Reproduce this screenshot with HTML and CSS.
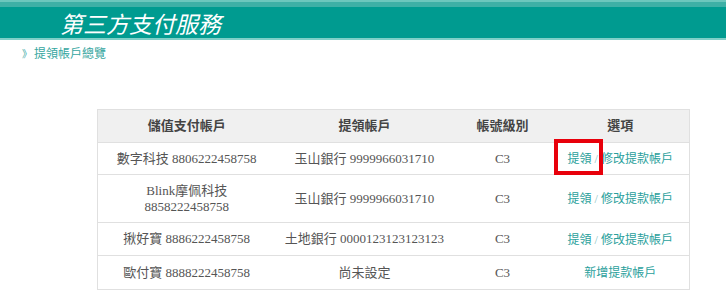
FILE: index.html
```html
<!DOCTYPE html>
<html lang="zh-Hant">
<head>
<meta charset="utf-8">
<link rel="stylesheet" href="styles.css">
</head>
<body>
<header class="banner">
  <div class="banner-top"></div>
  <div class="banner-main"><h1 class="title">第三方支付服務</h1></div>
  <div class="banner-line"></div>
</header>
<nav class="crumb"><span class="crumb-mark">》</span>提領帳戶總覽</nav>
<table class="accounts">
  <colgroup>
    <col class="c1"><col class="c2"><col class="c3"><col class="c4">
  </colgroup>
  <thead>
    <tr class="r-head"><th>儲值支付帳戶</th><th>提領帳戶</th><th>帳號級別</th><th>選項</th></tr>
  </thead>
  <tbody>
    <tr class="r1"><td>數字科技 8806222458758</td><td>玉山銀行 9999966031710</td><td>C3</td><td><a class="lnk hl">提領</a><span class="sep"> / </span><a class="lnk">修改提款帳戶</a></td></tr>
    <tr class="r2"><td>Blink摩佩科技<br>8858222458758</td><td>玉山銀行 9999966031710</td><td>C3</td><td><a class="lnk">提領</a><span class="sep"> / </span><a class="lnk">修改提款帳戶</a></td></tr>
    <tr class="r3"><td>揪好寶 8886222458758</td><td>土地銀行 0000123123123123</td><td>C3</td><td><a class="lnk">提領</a><span class="sep"> / </span><a class="lnk">修改提款帳戶</a></td></tr>
    <tr class="r4"><td>歐付寶 8888222458758</td><td>尚未設定</td><td>C3</td><td><a class="lnk">新增提款帳戶</a></td></tr>
  </tbody>
</table>
</body>
</html>
```
FILE: styles.css
```css
html, body {
  margin: 0;
  padding: 0;
  background: #ffffff;
}
body {
  font-family: "Liberation Serif", "Noto Sans CJK TC", serif;
  color: #555555;
}
.banner-top {
  height: 7px;
  background: linear-gradient(#6cc7bd 0, #6cc7bd 2px, #3eb0a6 2px, #3eb0a6 7px);
}
.banner-main {
  height: 31px;
  background: #009b90;
  display: flex;
  align-items: center;
}
.banner-line {
  height: 2px;
  background: #7fd0c8;
}
.title {
  margin: 0 0 0 60px;
  font-family: "Noto Sans CJK TC", sans-serif;
  font-weight: 400;
  font-style: italic;
  font-size: 23px;
  line-height: 28px;
  color: #ffffff;
  letter-spacing: 0;
}
.crumb {
  margin: 6px 0 0 22px;
  font-family: "Noto Sans CJK TC", sans-serif;
  font-size: 12px;
  line-height: 14px;
  color: #35a6a0;
}
.crumb-mark {
  font-size: 10px;
  margin-right: 2px;
}
.accounts {
  margin: 48px 0 0 97px;
  border-collapse: collapse;
  table-layout: fixed;
  width: 592px;
  font-size: 13px;
  border: 1px solid #e0e0e0;
}
.c1 { width: 178px; }
.c2 { width: 178px; }
.c3 { width: 98px; }
.c4 { width: 138px; }
.accounts th, .accounts td {
  text-align: center;
  vertical-align: middle;
  padding: 0;
  border-bottom: 1px solid #e0e0e0;
  line-height: 16px;
  white-space: nowrap;
}
.accounts th {
  background: #f0f0f0;
  font-weight: 700;
  color: #444444;
}
.r-head { height: 33px; }
.r1 { height: 32px; }
.r2 { height: 48px; }
.r3 { height: 33px; }
.r4 { height: 34px; }
.lnk {
  font-family: "Noto Sans CJK TC", sans-serif;
  font-size: 12px;
  color: #2a9f9c;
  text-decoration: none;
}
.sep {
  font-size: 12px;
  color: #8bbfbf;
}
.hl {
  position: relative;
}
.hl::after {
  content: "";
  position: absolute;
  left: -14px;
  right: -11px;
  top: -10px;
  bottom: -9px;
  border: 4px solid #e8000b;
}
```
